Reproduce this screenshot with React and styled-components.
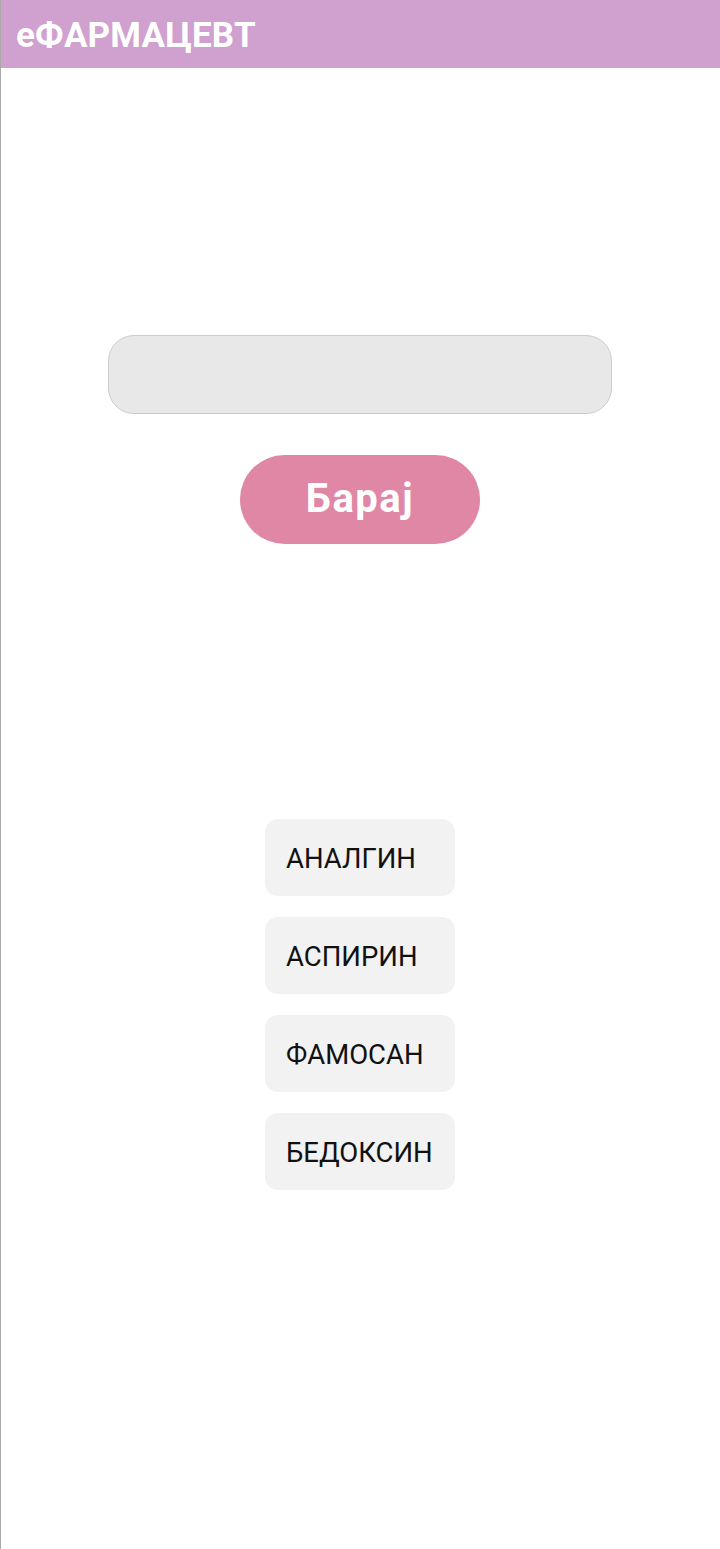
import React from "react";
import styled, { createGlobalStyle } from "styled-components";

const Global = createGlobalStyle`
  html, body { margin: 0; padding: 0; background: #ffffff; }
  body { font-family: Roboto, "Noto Sans", Arial, sans-serif; }
  * { box-sizing: border-box; }
`;

const Page = styled.div`
  min-height: 1549px;
  border-left: 1px solid #a9a9a9;
  background: #ffffff;
  display: flex;
  flex-direction: column;
`;

const Header = styled.header`
  height: 68px;
  background: #d0a0cf;
  display: flex;
  align-items: center;
  padding-left: 15px;
  padding-top: 2px;
`;

const Title = styled.h1`
  margin: 0;
  font-family: Roboto, sans-serif;
  font-weight: 700;
  font-size: 35px;
  color: #ffffff;
  letter-spacing: 0.2px;
`;

const SearchArea = styled.section`
  display: flex;
  flex-direction: column;
  align-items: center;
  padding-top: 267px;
  gap: 41px;
`;

const SearchInput = styled.input`
  width: 504px;
  height: 79px;
  border-radius: 26px;
  border: 1.5px solid #cccccc;
  background: #e8e8e8;
  outline: none;
  font-family: Roboto, sans-serif;
  font-size: 26px;
  padding: 0 24px;
  margin-left: -1px;
`;

const SearchButton = styled.button`
  width: 240px;
  height: 89px;
  border-radius: 45px;
  border: none;
  background: #df87a5;
  color: #ffffff;
  font-family: Roboto, sans-serif;
  font-weight: 700;
  font-size: 40px;
  letter-spacing: 1.5px;
  cursor: pointer;
  padding: 0 0 2px;
  margin-left: -1px;
`;

const List = styled.ul`
  list-style: none;
  margin: 275px 0 0 -1px;
  padding: 0;
  display: flex;
  flex-direction: column;
  align-items: center;
  gap: 21px;
`;

const Item = styled.li`
  width: 190px;
  height: 77px;
  border-radius: 13px;
  background: #f2f2f2;
  display: flex;
  align-items: center;
  padding-left: 21px;
  padding-top: 2px;
  font-family: Roboto, sans-serif;
  font-size: 27.5px;
  color: #111111;
`;

const drugs = ["АНАЛГИН", "АСПИРИН", "ФАМОСАН", "БЕДОКСИН"];

export default function App() {
  return (
    <>
      <Global />
      <Page>
        <Header>
          <Title>еФАРМАЦЕВТ</Title>
        </Header>
        <SearchArea>
          <SearchInput type="text" />
          <SearchButton>Барај</SearchButton>
        </SearchArea>
        <List>
          {drugs.map((d) => (
            <Item key={d}>{d}</Item>
          ))}
        </List>
      </Page>
    </>
  );
}
